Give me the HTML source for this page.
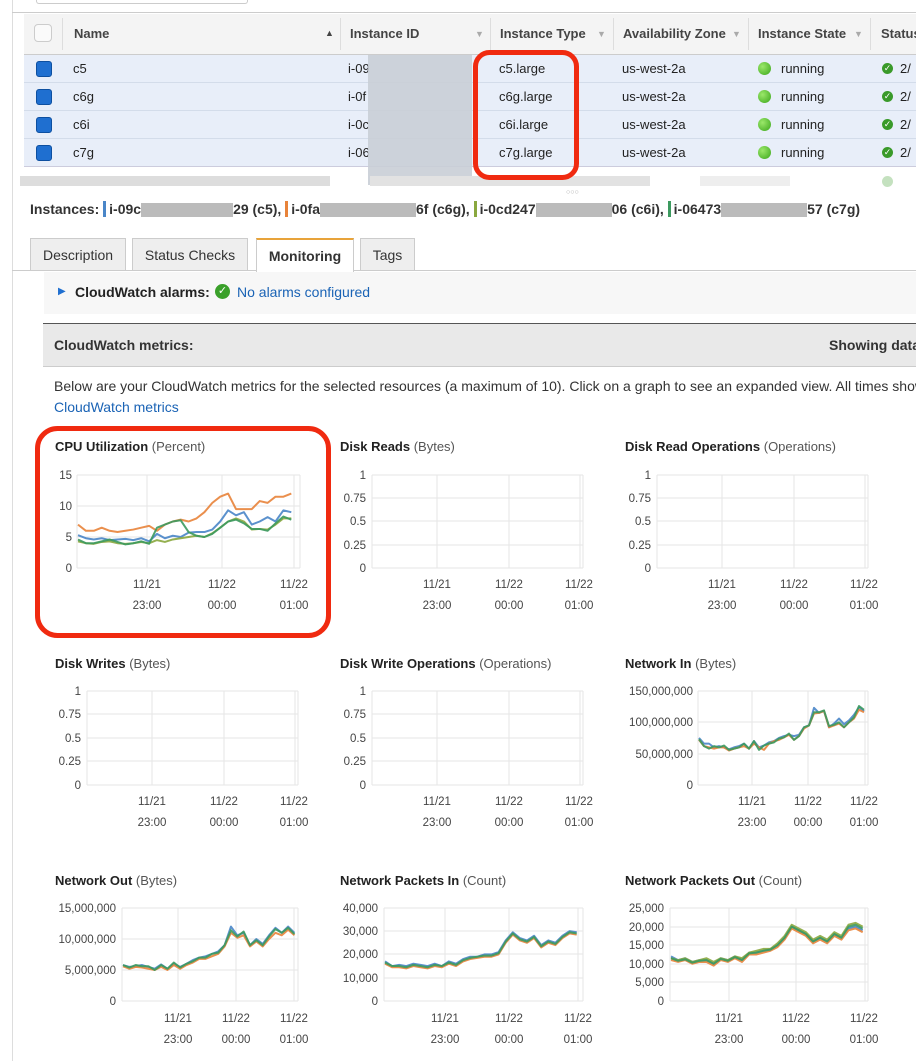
<!DOCTYPE html>
<html><head><meta charset="utf-8"><style>
body{margin:0;width:916px;height:1061px;overflow:hidden;background:#fff;font-family:"Liberation Sans",Arial,sans-serif;color:#333;position:relative}
.a{position:absolute;white-space:nowrap}
.th{font-size:13px;font-weight:bold;color:#444;top:26px}
.td{font-size:13px;color:#222}
.cb{position:absolute;width:14px;height:14px;border-radius:3px;background:#1f6fd0;border:1px solid #0d4fa0;left:36px}
.dot{position:absolute;width:13px;height:13px;border-radius:50%;background:radial-gradient(circle at 35% 35%,#9be86a,#3aa51a);left:758px}
.ok{position:absolute;width:11px;height:11px;border-radius:50%;background:#3a9a2a;left:882px;color:#fff;font-size:9px;line-height:11px;text-align:center}
.tab{position:absolute;top:238px;height:32px;border:1px solid #ccc;border-bottom:none;background:#eee;font-size:14px;line-height:32px;text-align:center;color:#333;box-sizing:border-box}
.arr{color:#aaa;font-size:9px;top:29px}
</style></head><body>
<div class="a" style="left:12px;top:0;width:1px;height:1061px;background:#ddd"></div>
<div class="a" style="left:36px;top:0;width:210px;height:3px;border:1px solid #ccc;border-top:none;border-radius:0 0 3px 3px"></div>
<div class="a" style="left:12px;top:12px;width:904px;height:1px;background:#ccc"></div>
<div class="a" style="left:24px;top:14px;width:892px;height:40px;background:#f4f4f4;border-bottom:1px solid #ccc"></div>
<div class="a" style="left:34px;top:24px;width:16px;height:16px;border:1px solid #ccc;border-radius:4px;background:#fafafa"></div>
<div class="a" style="left:62px;top:18px;width:1px;height:32px;background:#ddd"></div>
<div class="a th" style="left:74px">Name</div><div class="a" style="left:325px;top:28px;font-size:9px;color:#444">▲</div>
<div class="a" style="left:340px;top:18px;width:1px;height:32px;background:#ddd"></div>
<div class="a th" style="left:350px">Instance ID</div><div class="a arr" style="left:475px">▼</div>
<div class="a" style="left:490px;top:18px;width:1px;height:32px;background:#ddd"></div>
<div class="a th" style="left:500px">Instance Type</div><div class="a arr" style="left:597px">▼</div>
<div class="a" style="left:613px;top:18px;width:1px;height:32px;background:#ddd"></div>
<div class="a th" style="left:623px">Availability Zone</div><div class="a arr" style="left:732px">▼</div>
<div class="a" style="left:748px;top:18px;width:1px;height:32px;background:#ddd"></div>
<div class="a th" style="left:758px">Instance State</div><div class="a arr" style="left:854px">▼</div>
<div class="a" style="left:870px;top:18px;width:1px;height:32px;background:#ddd"></div>
<div class="a th" style="left:881px">Status</div>

<div class="a" style="left:24px;top:55px;width:892px;height:112px;background:#e8eef9"></div>
<div class="a" style="left:24px;top:82px;width:892px;height:1px;background:#d3dcea"></div>
<div class="a" style="left:24px;top:110px;width:892px;height:1px;background:#d3dcea"></div>
<div class="a" style="left:24px;top:138px;width:892px;height:1px;background:#d3dcea"></div>
<div class="a" style="left:24px;top:166px;width:892px;height:1px;background:#ccd"></div>

<div class="cb" style="top:61px"></div><div class="cb" style="top:89px"></div><div class="cb" style="top:117px"></div><div class="cb" style="top:145px"></div>
<div class="a td" style="left:73px;top:61px">c5</div><div class="a td" style="left:73px;top:89px">c6g</div><div class="a td" style="left:73px;top:117px">c6i</div><div class="a td" style="left:73px;top:145px">c7g</div>
<div class="a td" style="left:348px;top:61px">i-09</div><div class="a td" style="left:348px;top:89px">i-0f</div><div class="a td" style="left:348px;top:117px">i-0c</div><div class="a td" style="left:348px;top:145px">i-06</div>
<div class="a" style="left:368px;top:55px;width:104px;height:130px;background:#c9ced6;opacity:.9"></div>
<div class="a td" style="left:499px;top:61px">c5.large</div><div class="a td" style="left:499px;top:89px">c6g.large</div><div class="a td" style="left:499px;top:117px">c6i.large</div><div class="a td" style="left:499px;top:145px">c7g.large</div>
<div class="a td" style="left:622px;top:61px">us-west-2a</div><div class="a td" style="left:622px;top:89px">us-west-2a</div><div class="a td" style="left:622px;top:117px">us-west-2a</div><div class="a td" style="left:622px;top:145px">us-west-2a</div>
<div class="dot" style="top:62px"></div><div class="dot" style="top:90px"></div><div class="dot" style="top:118px"></div><div class="dot" style="top:146px"></div>
<div class="a td" style="left:781px;top:61px">running</div><div class="a td" style="left:781px;top:89px">running</div><div class="a td" style="left:781px;top:117px">running</div><div class="a td" style="left:781px;top:145px">running</div>
<div class="ok" style="top:63px">✓</div><div class="ok" style="top:91px">✓</div><div class="ok" style="top:119px">✓</div><div class="ok" style="top:147px">✓</div>
<div class="a td" style="left:900px;top:61px">2/</div><div class="a td" style="left:900px;top:89px">2/</div><div class="a td" style="left:900px;top:117px">2/</div><div class="a td" style="left:900px;top:145px">2/</div>
<div class="a" style="left:20px;top:176px;width:310px;height:10px;background:#ddd"></div>
<div class="a" style="left:370px;top:176px;width:280px;height:10px;background:#e2e2e2"></div>
<div class="a" style="left:700px;top:176px;width:90px;height:10px;background:#eee"></div>
<div class="ok" style="top:176px;opacity:.3"></div>
<div class="a" style="left:566px;top:189px;font-size:7px;color:#aaa">○○○</div>

<div class="a" style="left:30px;top:201px;font-size:14px;font-weight:bold;color:#333">Instances: <span style="border-left:3px solid #4a86c8;padding-left:3px">i-09c</span><span style="display:inline-block;width:92px;height:14px;background:#bbb;vertical-align:middle"></span>29 (c5), <span style="border-left:3px solid #e8833a;padding-left:3px">i-0fa</span><span style="display:inline-block;width:96px;height:14px;background:#bbb;vertical-align:middle"></span>6f (c6g), <span style="border-left:3px solid #8aa83f;padding-left:3px">i-0cd247</span><span style="display:inline-block;width:76px;height:14px;background:#bbb;vertical-align:middle"></span>06 (c6i), <span style="border-left:3px solid #3c9a5f;padding-left:3px">i-06473</span><span style="display:inline-block;width:86px;height:14px;background:#bbb;vertical-align:middle"></span>57 (c7g)</div>

<div class="a" style="left:12px;top:270px;width:904px;height:1px;background:#ccc"></div>
<div class="tab" style="left:30px;width:96px">Description</div>
<div class="tab" style="left:132px;width:116px">Status Checks</div>
<div class="tab" style="left:256px;width:98px;background:#fff;border-top:2px solid #e8a33a;height:34px;font-weight:bold">Monitoring</div>
<div class="tab" style="left:360px;width:55px">Tags</div>

<div class="a" style="left:44px;top:272px;width:872px;height:42px;background:#f7f7f7"></div>
<div class="a" style="left:58px;top:286px;font-size:10px;color:#1f6fd0">▶</div>
<div class="a" style="left:75px;top:284px;font-size:14px;font-weight:bold;color:#222">CloudWatch alarms:</div>
<div class="a" style="left:215px;top:284px;width:15px;height:15px;border-radius:50%;background:#3aa02a;color:#fff;font-size:11px;line-height:15px;text-align:center">✓</div>
<div class="a" style="left:237px;top:284px;font-size:14px;color:#1a63b5">No alarms configured</div>

<div class="a" style="left:43px;top:323px;width:873px;height:42px;background:#e9e9e9;border-top:1px solid #555;border-bottom:1px solid #ccc"></div>
<div class="a" style="left:54px;top:337px;font-size:14px;font-weight:bold;color:#333">CloudWatch metrics:</div>
<div class="a" style="left:829px;top:337px;font-size:14px;font-weight:bold;color:#333">Showing data</div>
<div class="a" style="left:54px;top:378px;font-size:14px;color:#333">Below are your CloudWatch metrics for the selected resources (a maximum of 10). Click on a graph to see an expanded view. All times show</div>
<div class="a" style="left:54px;top:399px;font-size:14px;color:#1a63b5">CloudWatch metrics</div>

<svg class="a" style="left:0;top:0" width="916" height="1061" font-family="Liberation Sans, Arial, sans-serif">
<defs><style>
.t{font-size:13px;fill:#333}.tb{font-weight:bold;fill:#222}.u{fill:#555}
.yl{font-size:11.5px;fill:#444;text-anchor:end}.xl{font-size:11.5px;fill:#444;text-anchor:middle}
.g{stroke:#e6e6e6;stroke-width:1;fill:none}
.s{fill:none;stroke-width:2;vector-effect:non-scaling-stroke;stroke-linejoin:round;opacity:.9}
.b{stroke:#4a86c8}.o{stroke:#e8833a}.v{stroke:#8aa83f}.n{stroke:#3c9a5f}
</style></defs>
<rect x="475.5" y="52.5" width="101" height="125" rx="14" fill="none" stroke="#f02a10" stroke-width="5"/>
<rect x="37.5" y="428.5" width="291" height="207" rx="20" fill="none" stroke="#f02a10" stroke-width="5"/>

<text x="55" y="451" class="t"><tspan class="tb">CPU Utilization</tspan> <tspan class="u">(Percent)</tspan></text>
<text x="340" y="451" class="t"><tspan class="tb">Disk Reads</tspan> <tspan class="u">(Bytes)</tspan></text>
<text x="625" y="451" class="t"><tspan class="tb">Disk Read Operations</tspan> <tspan class="u">(Operations)</tspan></text>
<text x="55" y="668" class="t"><tspan class="tb">Disk Writes</tspan> <tspan class="u">(Bytes)</tspan></text>
<text x="340" y="668" class="t"><tspan class="tb">Disk Write Operations</tspan> <tspan class="u">(Operations)</tspan></text>
<text x="625" y="668" class="t"><tspan class="tb">Network In</tspan> <tspan class="u">(Bytes)</tspan></text>
<text x="55" y="885" class="t"><tspan class="tb">Network Out</tspan> <tspan class="u">(Bytes)</tspan></text>
<text x="340" y="885" class="t"><tspan class="tb">Network Packets In</tspan> <tspan class="u">(Count)</tspan></text>
<text x="625" y="885" class="t"><tspan class="tb">Network Packets Out</tspan> <tspan class="u">(Count)</tspan></text>

<g><path class="g" d="M77 475H300M77 506H300M77 537H300M77 568H300M77 475V568M147 475V568M222 475V568M294 475V568M300 475V568"/>
<text class="yl" x="72" y="479">15</text><text class="yl" x="72" y="510">10</text><text class="yl" x="72" y="541">5</text><text class="yl" x="72" y="572">0</text>
<text class="xl" x="147" y="588">11/21</text><text class="xl" x="222" y="588">11/22</text><text class="xl" x="294" y="588">11/22</text>
<text class="xl" x="147" y="609">23:00</text><text class="xl" x="222" y="609">00:00</text><text class="xl" x="294" y="609">01:00</text>
<g transform="translate(78,568) scale(7.9,-6.2)">
<polyline class="s o" points="0,7 1,6 2,6 3,6.5 4,6 5,5.8 6,6 7,6.2 8,6.5 9,6.8 10,6 11,7 12,7.5 13,7.8 14,7.5 15,8 16,9 17,10.5 18,11.5 19,12 20,9.5 21,9.5 22,9.5 23,10.8 24,10.5 25,11.5 26,11.5 27,12"/>
<polyline class="s b" points="0,5.3 1,4.8 2,4.6 3,4.8 4,4.5 5,4.6 6,4.7 7,4.5 8,4.8 9,4.3 10,5.5 11,4.8 12,5.2 13,5 14,5.7 15,5.8 16,5.8 17,6.2 18,7.5 19,9.3 20,8.5 21,9 22,7 23,7.5 24,8.2 25,7.5 26,9.3 27,9"/>
<polyline class="s v" points="0,4.3 1,4 2,3.9 3,4.2 4,4.3 5,4 6,3.9 7,4 8,4.2 9,4 10,4.5 11,4.2 12,4.6 13,4.8 14,5 15,5.2 16,5 17,5.6 18,6.5 19,7.5 20,8 21,7.5 22,6.2 23,6.3 24,6.2 25,7 26,8 27,8"/>
<polyline class="s n" points="0,4.6 1,4 2,4 3,4.3 4,4.6 5,4.2 6,3.8 7,4 8,4.3 9,3.9 10,6.5 11,7 12,7.5 13,7.7 14,5.8 15,5.2 16,5 17,5.5 18,6.5 19,7.5 20,7.8 21,7.2 22,6.3 23,6.3 24,6 25,7.2 26,8.3 27,7.8"/>
</g></g>

<g><path class="g" d="M372 475H583M372 498H583M372 521H583M372 545H583M372 568H583M372 475V568M437 475V568M509 475V568M580 475V568M583 475V568"/>
<text class="yl" x="366" y="479">1</text><text class="yl" x="366" y="502">0.75</text><text class="yl" x="366" y="525">0.5</text><text class="yl" x="366" y="549">0.25</text><text class="yl" x="366" y="572">0</text>
<text class="xl" x="437" y="588">11/21</text><text class="xl" x="509" y="588">11/22</text><text class="xl" x="579" y="588">11/22</text>
<text class="xl" x="437" y="609">23:00</text><text class="xl" x="509" y="609">00:00</text><text class="xl" x="579" y="609">01:00</text></g>
<g><path class="g" d="M657 475H868M657 498H868M657 521H868M657 545H868M657 568H868M657 475V568M722 475V568M794 475V568M865 475V568M868 475V568"/>
<text class="yl" x="651" y="479">1</text><text class="yl" x="651" y="502">0.75</text><text class="yl" x="651" y="525">0.5</text><text class="yl" x="651" y="549">0.25</text><text class="yl" x="651" y="572">0</text>
<text class="xl" x="722" y="588">11/21</text><text class="xl" x="794" y="588">11/22</text><text class="xl" x="864" y="588">11/22</text>
<text class="xl" x="722" y="609">23:00</text><text class="xl" x="794" y="609">00:00</text><text class="xl" x="864" y="609">01:00</text></g>

<g><path class="g" d="M87 691H298M87 714H298M87 738H298M87 761H298M87 785H298M87 691V785M152 691V785M224 691V785M295 691V785M298 691V785"/>
<text class="yl" x="81" y="695">1</text><text class="yl" x="81" y="718">0.75</text><text class="yl" x="81" y="742">0.5</text><text class="yl" x="81" y="765">0.25</text><text class="yl" x="81" y="789">0</text>
<text class="xl" x="152" y="805">11/21</text><text class="xl" x="224" y="805">11/22</text><text class="xl" x="294" y="805">11/22</text>
<text class="xl" x="152" y="826">23:00</text><text class="xl" x="224" y="826">00:00</text><text class="xl" x="294" y="826">01:00</text></g>
<g><path class="g" d="M372 691H583M372 714H583M372 738H583M372 761H583M372 785H583M372 691V785M437 691V785M509 691V785M580 691V785M583 691V785"/>
<text class="yl" x="366" y="695">1</text><text class="yl" x="366" y="718">0.75</text><text class="yl" x="366" y="742">0.5</text><text class="yl" x="366" y="765">0.25</text><text class="yl" x="366" y="789">0</text>
<text class="xl" x="437" y="805">11/21</text><text class="xl" x="509" y="805">11/22</text><text class="xl" x="579" y="805">11/22</text>
<text class="xl" x="437" y="826">23:00</text><text class="xl" x="509" y="826">00:00</text><text class="xl" x="579" y="826">01:00</text></g>
<g><path class="g" d="M698 691H868M698 722H868M698 754H868M698 785H868M698 691V785M752 691V785M808 691V785M865 691V785M868 691V785"/>
<text class="yl" x="693" y="695">150,000,000</text><text class="yl" x="693" y="726">100,000,000</text><text class="yl" x="693" y="758">50,000,000</text><text class="yl" x="693" y="789">0</text>
<text class="xl" x="752" y="805">11/21</text><text class="xl" x="808" y="805">11/22</text><text class="xl" x="864" y="805">11/22</text>
<text class="xl" x="752" y="826">23:00</text><text class="xl" x="808" y="826">00:00</text><text class="xl" x="864" y="826">01:00</text>
<g transform="translate(699,785) scale(5,-0.627)">
<polyline class="s b" points="0,75 1,66 2,66 3,60 4,62 5,60 6,57 7,60 8,62 9,66 10,58 11,70 12,60 13,63 14,68 15,70 16,75 17,78 18,80 19,78 20,80 21,92 22,95 23,123 24,115 25,118 26,92 27,98 28,106 29,97 30,103 31,112 32,124 33,118"/>
<polyline class="s o" points="0,72 1,62 2,60 3,58 4,60 5,60 6,55 7,58 8,60 9,62 10,58 11,66 12,60 13,56 14,66 15,70 16,72 17,76 18,80 19,72 20,78 21,90 22,95 23,114 24,115 25,118 26,92 27,95 28,98 29,92 30,100 31,106 32,120 33,116"/>
<polyline class="s n" points="0,73 1,62 2,58 3,62 4,60 5,63 6,56 7,58 8,60 9,66 10,58 11,70 12,56 13,63 14,66 15,68 16,74 17,76 18,82 19,72 20,78 21,92 22,95 23,116 24,116 25,119 26,94 27,96 28,100 29,92 30,100 31,108 32,126 33,120"/>
</g></g>

<g><path class="g" d="M122 908H298M122 939H298M122 970H298M122 1001H298M122 908V1001M178 908V1001M236 908V1001M294 908V1001M298 908V1001"/>
<text class="yl" x="116" y="912">15,000,000</text><text class="yl" x="116" y="943">10,000,000</text><text class="yl" x="116" y="974">5,000,000</text><text class="yl" x="116" y="1005">0</text>
<text class="xl" x="178" y="1022">11/21</text><text class="xl" x="236" y="1022">11/22</text><text class="xl" x="294" y="1022">11/22</text>
<text class="xl" x="178" y="1043">23:00</text><text class="xl" x="236" y="1043">00:00</text><text class="xl" x="294" y="1043">01:00</text>
<g transform="translate(123,1001) scale(6.35,-6.2)">
<polyline class="s b" points="0,5.8 1,5.5 2,5.6 3,5.8 4,5.5 5,5.2 6,5.9 7,5.2 8,6 9,5.5 10,6 11,6.6 12,7 13,7.2 14,7.6 15,8 16,9 17,12 18,10.6 19,11 20,9 21,10 22,9.2 23,10.6 24,11.8 25,11 26,12 27,11"/>
<polyline class="s o" points="0,5.6 1,5.2 2,5.5 3,5.4 4,5.2 5,5 6,5.5 7,5 8,5.8 9,5.2 10,5.8 11,6.2 12,6.8 13,6.8 14,7.2 15,7.6 16,8.8 17,11 18,10.2 19,10.6 20,8.8 21,9.6 22,8.8 23,10 24,11 25,10.6 26,11.5 27,10.6"/>
<polyline class="s n" points="0,5.8 1,5.4 2,5.8 3,5.6 4,5.6 5,5 6,5.8 7,5.2 8,6.2 9,5.4 10,6 11,6.4 12,7 13,7 14,7.6 15,7.8 16,9 17,11.4 18,10.4 19,11.2 20,9 21,9.8 22,9 23,10.4 24,11.6 25,11 26,11.8 27,10.8"/>
</g></g>
<g><path class="g" d="M384 908H583M384 931H583M384 954H583M384 978H583M384 1001H583M384 908V1001M445 908V1001M509 908V1001M578 908V1001M583 908V1001"/>
<text class="yl" x="378" y="912">40,000</text><text class="yl" x="378" y="935">30,000</text><text class="yl" x="378" y="958">20,000</text><text class="yl" x="378" y="982">10,000</text><text class="yl" x="378" y="1005">0</text>
<text class="xl" x="445" y="1022">11/21</text><text class="xl" x="509" y="1022">11/22</text><text class="xl" x="578" y="1022">11/22</text>
<text class="xl" x="445" y="1043">23:00</text><text class="xl" x="509" y="1043">00:00</text><text class="xl" x="578" y="1043">01:00</text>
<g transform="translate(385,1001) scale(7.1,-2.33)">
<polyline class="s b" points="0,17 1,15 2,15.5 3,15 4,16 5,15.5 6,15 7,16 8,15 9,17 10,16 11,18 12,19 13,19 14,20 15,20 16,21 17,26 18,29.5 19,27 20,26 21,28 22,24 23,26 24,25 25,28 26,30 27,29.5"/>
<polyline class="s o" points="0,16 1,14.5 2,14.5 3,14 4,15 5,14.5 6,14 7,15 8,14.5 9,16 10,15 11,17 12,18 13,18.5 14,19 15,19 16,20 17,25 18,28.5 19,26 20,25 21,27 22,23 23,25 24,24 25,27 26,29 27,28.5"/>
<polyline class="s n" points="0,16.5 1,15 2,15 3,14.5 4,15.5 5,15 6,14.5 7,15.5 8,15 9,16.5 10,15.5 11,17.5 12,18.5 13,19 14,19.5 15,19.5 16,20.5 17,25.5 18,29 19,26.5 20,25.5 21,27.5 22,23.5 23,25.5 24,24.5 25,27.5 26,29.5 27,29"/>
</g></g>
<g><path class="g" d="M670 908H868M670 927H868M670 945H868M670 964H868M670 982H868M670 1001H868M670 908V1001M729 908V1001M796 908V1001M865 908V1001M868 908V1001"/>
<text class="yl" x="664" y="912">25,000</text><text class="yl" x="664" y="931">20,000</text><text class="yl" x="664" y="949">15,000</text><text class="yl" x="664" y="968">10,000</text><text class="yl" x="664" y="986">5,000</text><text class="yl" x="664" y="1005">0</text>
<text class="xl" x="729" y="1022">11/21</text><text class="xl" x="796" y="1022">11/22</text><text class="xl" x="864" y="1022">11/22</text>
<text class="xl" x="729" y="1043">23:00</text><text class="xl" x="796" y="1043">00:00</text><text class="xl" x="864" y="1043">01:00</text>
<g transform="translate(671,1001) scale(7.1,-3.72)">
<polyline class="s b" points="0,12 1,11 2,11.5 3,10.5 4,11 5,11 6,10 7,11.5 8,11 9,12 10,11 11,13 12,13 13,13.5 14,14 15,15 16,17 17,20 18,19 19,18 20,16 21,17 22,16 23,18 24,17 25,19.5 26,20 27,19"/>
<polyline class="s o" points="0,11 1,10.5 2,11 3,10 4,10.5 5,10.5 6,9.5 7,11 8,10.5 9,11.5 10,10.5 11,12.5 12,12.5 13,13 14,13.5 15,14.5 16,16.5 17,19.5 18,18.5 19,17.5 20,15.5 21,16.5 22,15.5 23,17.5 24,16.5 25,19 26,19.5 27,18.5"/>
<polyline class="s v" points="0,11.5 1,11 2,11.5 3,10.5 4,11 5,11.5 6,10.5 7,11.5 8,11 9,12 10,11.5 11,13 12,13.5 13,14 14,14 15,15.5 16,17.5 17,20.5 18,19.5 19,18.5 20,16.5 21,17.5 22,16.5 23,18.5 24,17.5 25,20.5 26,21 27,20"/>
<polyline class="s n" points="0,11.5 1,10.8 2,11.2 3,10.3 4,10.8 5,11 6,10 7,11.3 8,10.8 9,11.8 10,11 11,12.8 12,13 13,13.5 14,13.8 15,15 16,17 17,20 18,19 19,18 20,16 21,17 22,16 23,18 24,17 25,20 26,20.5 27,19.5"/>
</g></g>
</svg>
</body></html>
